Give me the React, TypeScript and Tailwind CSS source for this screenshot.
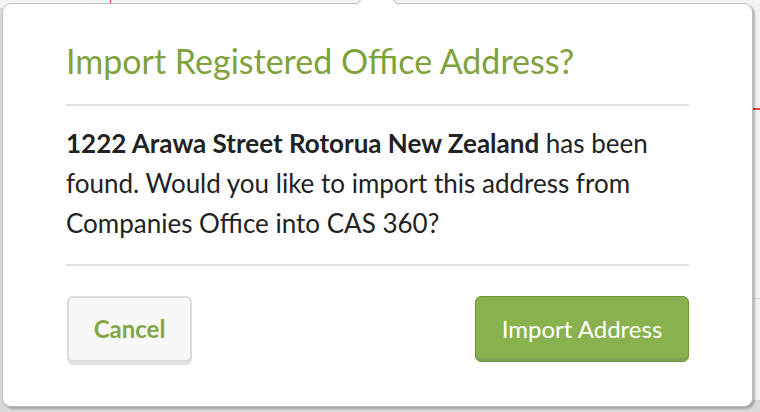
export default function App() {
  return (
    <div className="relative h-[412px] w-[760px] overflow-hidden bg-[#d9d9d9] font-['Lato',sans-serif]">
      {/* page behind the popover */}
      <div className="absolute left-0 top-0 h-[8px] w-full bg-[#f4f4f4]" />
      <div className="absolute left-[110px] top-0 h-[8px] w-[1px] bg-[#e03a3a]" />
      <div className="absolute right-0 top-0 h-[400px] w-[8px] bg-[#f2f2f2]" />
      <div className="absolute right-0 top-[108px] h-[2px] w-[8px] bg-[#e04545]" />
      <div className="absolute right-0 top-[298px] h-[1px] w-[8px] bg-[#dddddd]" />

      <div className="relative ml-[2px] mt-[3px] flex h-[404px] w-[751px] flex-col rounded-[9px] border border-[#bdbdbd] bg-white px-[63px] pt-[37px] shadow-[2px_2px_2px_rgba(0,0,0,0.25)]">
        {/* arrow */}
        <div className="absolute left-[359px] top-[-15px] h-[30px] w-[30px] rotate-45 border-l border-t border-[#bdbdbd] bg-white" />
        <h1 className="relative text-[34px] font-normal leading-[40px] text-[#7fa23d]">Import Registered Office Address?</h1>
        <div className="mt-[23px] h-[2px] bg-[#e0e0e0]" />
        <p className="mt-[17px] text-[26px] leading-[40px] text-[#222]">
          <strong className="font-bold">1222 Arawa Street Rotorua New Zealand</strong> has been found. Would you like to
          import this address from Companies Office into CAS 360?
        </p>
        <div className="mt-[21px] h-[2px] bg-[#e0e0e0]" />
        <div className="mt-[30px] flex items-start justify-between">
          <button className="ml-[1px] h-[66px] w-[125px] rounded-[6px] border-2 border-[#dcdcdc] bg-[#f8f8f8] text-[24px] font-bold text-[#82a742] shadow-[0_3px_0_#e2e2e2]">
            Cancel
          </button>
          <button className="h-[66px] w-[214px] rounded-[6px] border border-[#6e9638] bg-[#89b24f] text-[24px] font-normal text-white shadow-[inset_0_-3px_0_#7ea35a]">
            Import Address
          </button>
        </div>
      </div>
    </div>
  )
}
